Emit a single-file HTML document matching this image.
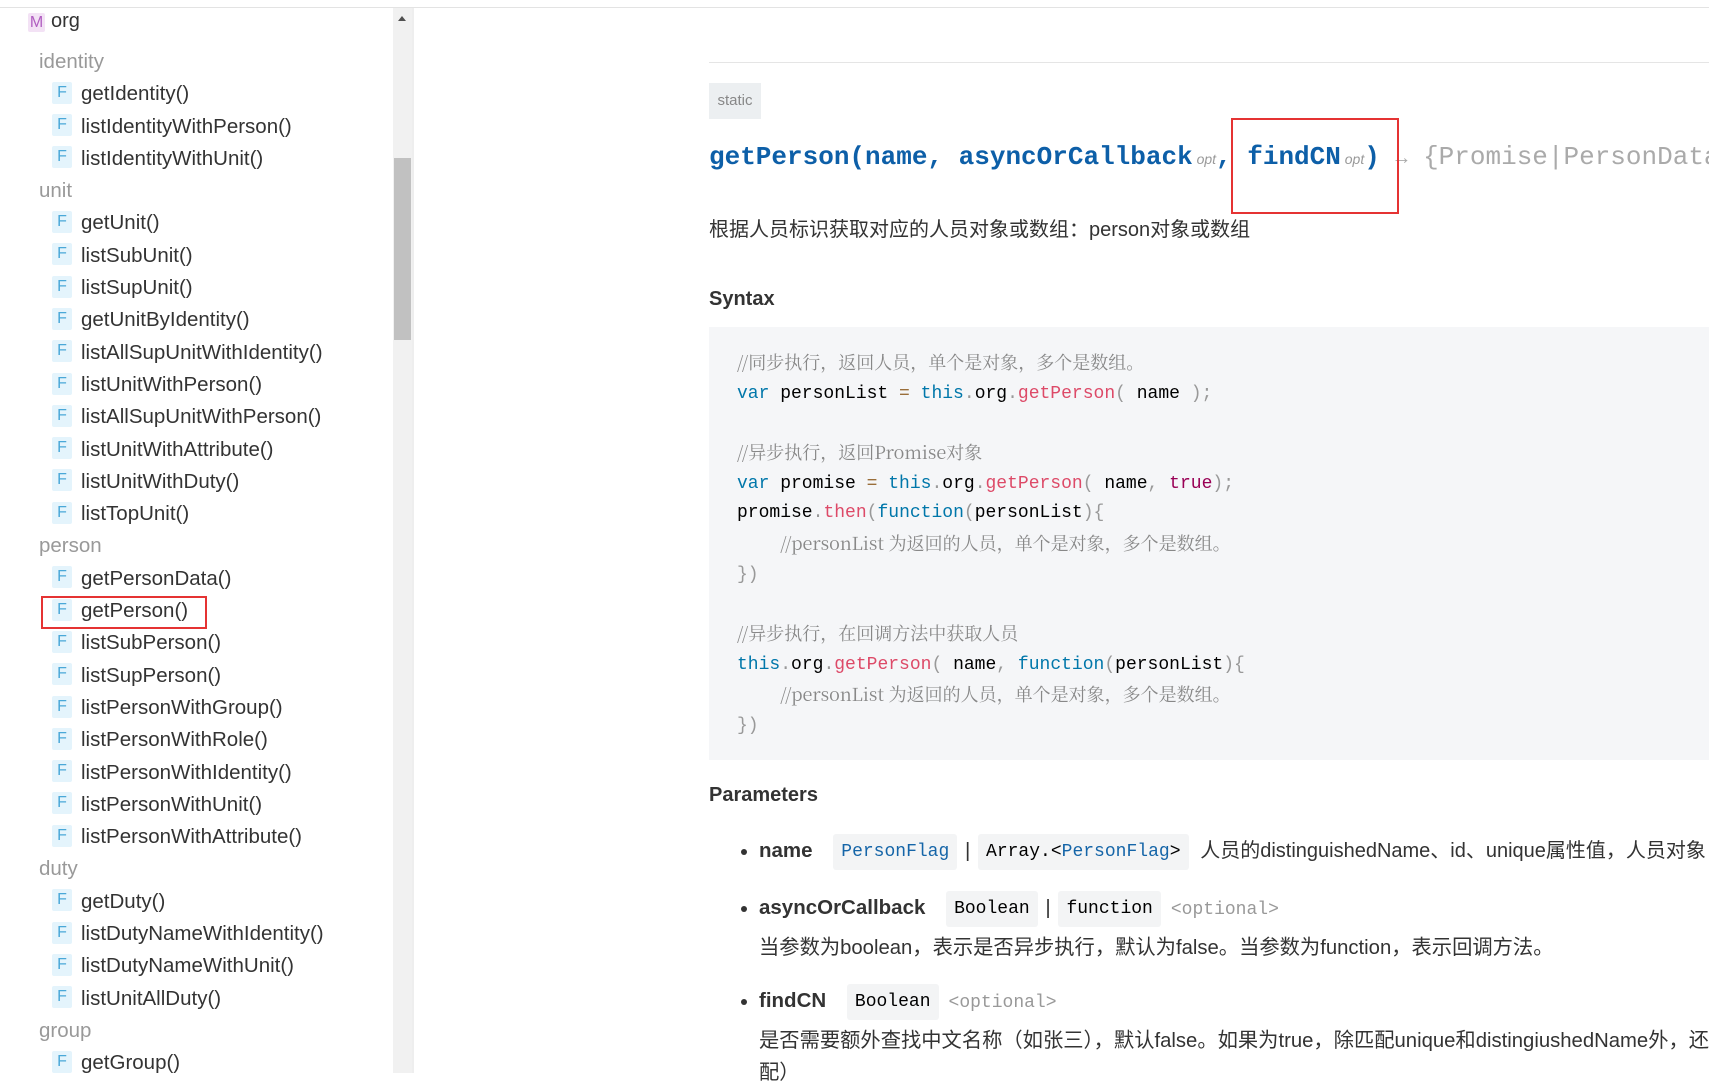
<!DOCTYPE html>
<html><head><meta charset="utf-8"><style>
*{margin:0;padding:0;box-sizing:border-box}
body{width:1709px;height:1073px;overflow:hidden;background:#fff;font-family:"Liberation Sans","Noto Sans CJK SC",sans-serif;color:#333;position:relative}
.topline{position:absolute;left:0;top:7px;width:1709px;height:1px;background:#e3e3e3}
.sb{position:absolute;left:393px;top:8px;width:19px;height:1065px;background:#f1f1f1}
.thumb{position:absolute;left:394px;top:158px;width:17px;height:182px;background:#c1c1c1}
.arr{position:absolute;left:398px;top:16px;width:0;height:0;border-left:4px solid transparent;border-right:4px solid transparent;border-bottom:5px solid #505050}
.divider{position:absolute;left:412px;top:8px;width:2px;height:1065px;background:#eee}
.org{position:absolute;left:28px;top:10px;font-size:20px;color:#333}
.org b{display:inline-block;width:17px;height:19px;background:#f3e2f5;color:#b05ec0;font-weight:normal;font-size:16px;text-align:center;line-height:19px;margin-right:6px;border-radius:2px}
.list{position:absolute;left:0;top:46px;font-size:20.5px}
.list div{height:32.3px;line-height:32.3px;white-space:nowrap}
.h{padding-left:39px;color:#999}
.f{padding-left:52px;color:#333}
.f i{display:inline-block;width:20px;height:22px;line-height:22px;background:#e4f4fc;color:#4aa8d8;font-style:normal;text-align:center;font-size:16px;margin-right:9px;vertical-align:middle;border-radius:2px;position:relative;top:-2px}
.redside{position:absolute;left:41px;top:596px;width:166px;height:33px;border:2px solid #e53333}
.hr{position:absolute;left:709px;top:62px;width:1000px;height:1px;background:#e5e5e5}
.static{position:absolute;left:709px;top:83px;width:52px;height:36px;background:#eceff1;color:#888;font-size:15px;line-height:36px;text-align:center}
.title{position:absolute;left:709px;top:142px;font-family:"Liberation Mono",monospace;font-weight:bold;font-size:26px;color:#0d5fa8;white-space:nowrap}
.title sub{font-weight:normal;font-style:italic;font-size:14px;color:#999;vertical-align:baseline;font-family:"Liberation Sans",sans-serif}
.title .ret{font-weight:normal;color:#aaa}
.redtop{position:absolute;left:1231px;top:118px;width:168px;height:96px;border:2px solid #e53333}
.desc{position:absolute;left:709px;top:213px;font-size:20px;color:#333}
.h3{position:absolute;left:709px;font-size:20px;font-weight:bold;color:#333}
.code{position:absolute;left:709px;top:327px;width:1000px;height:433px;background:#f5f6f8}
.code pre{position:absolute;left:28px;top:21px;font-family:"Liberation Mono","Noto Sans CJK SC",monospace;font-size:18px;line-height:29.1px;color:#000}
.c{color:#888;font-family:"Noto Serif CJK SC","Liberation Mono",serif}
.k{color:#07a}.p{color:#999}.fn{color:#dd4a68}.t{color:#905}.o{color:#9a6e3a}
.par{position:absolute;left:741px;font-size:20.5px;white-space:nowrap}
.par .dot{display:inline-block;width:6px;height:6px;border-radius:3px;background:#333;margin-right:12px;vertical-align:middle}
.par b{color:#333;margin-right:15px}
.ty{display:inline-block;background:#f3f4f5;padding:0 8px;height:36px;line-height:36px;font-family:"Liberation Mono",monospace;font-size:18px;color:#000;border-radius:3px;vertical-align:middle}
.bl{color:#1565a8}
.opt{font-family:"Liberation Mono",monospace;font-size:18px;color:#999;margin-left:10px}
.pd{position:absolute;left:759px;font-size:20.3px;color:#333;white-space:nowrap}
</style></head><body>
<div class="topline"></div>
<div class="org"><b>M</b>org</div>
<div class="list">
<div class="h">identity</div>
<div class="f"><i>F</i>getIdentity()</div>
<div class="f"><i>F</i>listIdentityWithPerson()</div>
<div class="f"><i>F</i>listIdentityWithUnit()</div>
<div class="h">unit</div>
<div class="f"><i>F</i>getUnit()</div>
<div class="f"><i>F</i>listSubUnit()</div>
<div class="f"><i>F</i>listSupUnit()</div>
<div class="f"><i>F</i>getUnitByIdentity()</div>
<div class="f"><i>F</i>listAllSupUnitWithIdentity()</div>
<div class="f"><i>F</i>listUnitWithPerson()</div>
<div class="f"><i>F</i>listAllSupUnitWithPerson()</div>
<div class="f"><i>F</i>listUnitWithAttribute()</div>
<div class="f"><i>F</i>listUnitWithDuty()</div>
<div class="f"><i>F</i>listTopUnit()</div>
<div class="h">person</div>
<div class="f"><i>F</i>getPersonData()</div>
<div class="f"><i>F</i>getPerson()</div>
<div class="f"><i>F</i>listSubPerson()</div>
<div class="f"><i>F</i>listSupPerson()</div>
<div class="f"><i>F</i>listPersonWithGroup()</div>
<div class="f"><i>F</i>listPersonWithRole()</div>
<div class="f"><i>F</i>listPersonWithIdentity()</div>
<div class="f"><i>F</i>listPersonWithUnit()</div>
<div class="f"><i>F</i>listPersonWithAttribute()</div>
<div class="h">duty</div>
<div class="f"><i>F</i>getDuty()</div>
<div class="f"><i>F</i>listDutyNameWithIdentity()</div>
<div class="f"><i>F</i>listDutyNameWithUnit()</div>
<div class="f"><i>F</i>listUnitAllDuty()</div>
<div class="h">group</div>
<div class="f"><i>F</i>getGroup()</div>
</div>
<div class="redside"></div>
<div class="sb"></div><div class="thumb"></div><div class="arr"></div><div class="divider"></div>

<div class="hr"></div>
<div class="static">static</div>
<div class="title">getPerson(name, asyncOrCallback<sub> opt</sub>, findCN<sub> opt</sub>) <span class="ret" style="font-size:20px">→</span> <span class="ret">{Promise|PersonData}</span></div>
<div class="redtop"></div>
<div class="desc">根据人员标识获取对应的人员对象或数组：person对象或数组</div>
<div class="h3" style="top:288px">Syntax</div>
<div class="code"><pre><span class="c">//同步执行，返回人员，单个是对象，多个是数组。</span>
<span class="k">var</span> personList <span class="o">=</span> <span class="k">this</span><span class="p">.</span>org<span class="p">.</span><span class="fn">getPerson</span><span class="p">(</span> name <span class="p">);</span>

<span class="c">//异步执行，返回Promise对象</span>
<span class="k">var</span> promise <span class="o">=</span> <span class="k">this</span><span class="p">.</span>org<span class="p">.</span><span class="fn">getPerson</span><span class="p">(</span> name<span class="p">,</span> <span class="t">true</span><span class="p">);</span>
promise<span class="p">.</span><span class="fn">then</span><span class="p">(</span><span class="k">function</span><span class="p">(</span>personList<span class="p">){</span>
    <span class="c">//personList 为返回的人员，单个是对象，多个是数组。</span>
<span class="p">})</span>

<span class="c">//异步执行，在回调方法中获取人员</span>
<span class="k">this</span><span class="p">.</span>org<span class="p">.</span><span class="fn">getPerson</span><span class="p">(</span> name<span class="p">,</span> <span class="k">function</span><span class="p">(</span>personList<span class="p">){</span>
    <span class="c">//personList 为返回的人员，单个是对象，多个是数组。</span>
<span class="p">})</span></pre></div>
<div class="h3" style="top:784px">Parameters</div>
<div class="par" style="top:834px"><span class="dot"></span><b>name</b> <span class="ty bl">PersonFlag</span> <span style="color:#333;margin:0 2px">|</span> <span class="ty">Array.&lt;<span class="bl">PersonFlag</span>&gt;</span> <span style="font-size:20px;color:#333;margin-left:6px">人员的distinguishedName、id、unique属性值，人员对象</span></div>
<div class="par" style="top:891px"><span class="dot"></span><b>asyncOrCallback</b> <span class="ty">Boolean</span> <span style="color:#333;margin:0 2px">|</span> <span class="ty">function</span><span class="opt">&lt;optional&gt;</span></div>
<div class="pd" style="top:930px">当参数为boolean，表示是否异步执行，默认为false。当参数为function，表示回调方法。</div>
<div class="par" style="top:984px"><span class="dot"></span><b>findCN</b> <span class="ty">Boolean</span><span class="opt">&lt;optional&gt;</span></div>
<div class="pd" style="top:1023px">是否需要额外查找中文名称（如张三），默认false。如果为true，除匹配unique和distingiushedName外，还会匹</div>
<div class="pd" style="top:1055px">配）</div>
</body></html>
